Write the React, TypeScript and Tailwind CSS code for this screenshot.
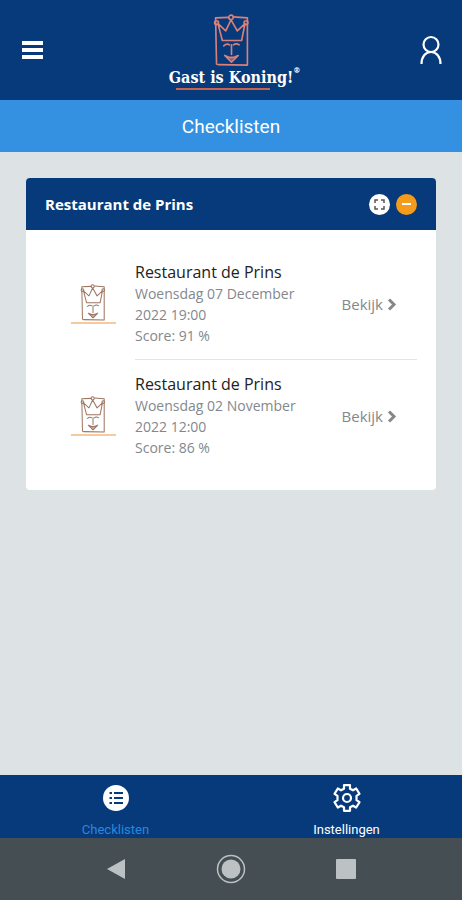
import type { SVGProps } from 'react'

const visits = [
    { id: 1, name: 'Restaurant de Prins', date: 'Woensdag 07 December 2022 19:00', score: 91 },
    { id: 2, name: 'Restaurant de Prins', date: 'Woensdag 02 November 2022 12:00', score: 86 },
]

function KingMark(props: SVGProps<SVGSVGElement>) {
    return (
        <svg viewBox="0 0 38 56" fill="none" stroke="currentColor" strokeLinejoin="round" strokeLinecap="round" aria-hidden="true" {...props}>
            <path d="M16 3.500 2.500 4 3.500 52M21 3l14.500 1L35.500 53 5 52.500" />
            <circle cx="18.500" cy="3.500" r="2.300" />
            <circle cx="3.500" cy="9" r="2" />
            <circle cx="34" cy="9" r="2" />
            <path d="M5 10 9.500 27.500h20L33 10l-8 7.500L18.500 6 13 17.500Z" />
            <path d="M11 33q3-3 6-1M21 32q3-2 6 0M19 32v10" />
            <path d="M12 43l7 7 7-7-5 2h-4Z" fill="currentColor" fillOpacity="0.6" />
        </svg>
    )
}

function Header() {
    return (
        <header className="flex h-[100px] items-center justify-between bg-[#073a7b] px-5 text-white">
            <div className="flex flex-1">
                <button type="button" aria-label="Menu" className="p-0.5">
                    <svg width="21" height="18" viewBox="0 0 21 18" fill="currentColor">
                        <path d="M0 0h21v4H0zM0 7h21v4H0zM0 14h21v4H0z" />
                    </svg>
                </button>
            </div>
            <a href="#" className="flex flex-col items-center pt-1">
                <KingMark className="h-[54px] w-[37px] text-[#d98078]" strokeWidth="1.700" />
                <span className="relative font-['DejaVu_Serif_Condensed','DejaVu_Serif',serif] text-base leading-5 font-bold whitespace-nowrap">
                    Gast is Koning!
                    <span className="absolute -top-1 left-full text-[8px] leading-3">®</span>
                </span>
                <span className="mr-4 h-0.5 w-[94px] bg-[#c8624f]" />
            </a>
            <div className="flex flex-1 justify-end">
                <button type="button" aria-label="Profiel">
                    <svg width="22" height="30" viewBox="0 0 22 30" fill="none" stroke="currentColor" strokeWidth="2.200">
                        <circle cx="11" cy="9.500" r="7.500" />
                        <path d="M1.500 29c0-7.500 4-12 9.500-12s9.500 4.500 9.500 12" />
                    </svg>
                </button>
            </div>
        </header>
    )
}

function Card() {
    return (
        <section className="overflow-hidden rounded bg-white">
            <div className="flex h-[52px] items-center gap-1.5 bg-[#073a7b] px-[19px] text-white">
                <h2 className="flex-1 text-[15px] font-bold">Restaurant de Prins</h2>
                <button type="button" aria-label="Volledig scherm" className="flex size-[21px] items-center justify-center rounded-full bg-white text-[#555]">
                    <svg width="11" height="11" viewBox="0 0 11 11" fill="none" stroke="currentColor" strokeWidth="1.500">
                        <path d="M1 4V1h3M7 1h3v3M10 7v3H7M4 10H1V7" />
                    </svg>
                </button>
                <button type="button" aria-label="Inklappen" className="flex size-[21px] items-center justify-center rounded-full bg-[#f59b1c]">
                    <span className="h-0.5 w-[9px] bg-white" />
                </button>
            </div>
            <ul className="px-[19px] py-[18px]">
                {visits.map((visit) => (
                    <li key={visit.id} className="group flex">
                        <div className="flex w-[90px] flex-col items-center justify-center pl-1.5">
                            <KingMark className="h-[38px] w-[26px] text-[#9c7660]" strokeWidth="1.500" />
                            <span className="h-0.5 w-[45px] bg-[#f6c9a0]" />
                        </div>
                        <div className="flex flex-1 items-center justify-between border-b border-[#e4e4e4] pt-3.5 pb-[13px] pr-5 group-last:border-transparent">
                            <div className="w-[170px] text-sm leading-[21px] text-[#83888e]">
                                <h3 className="text-base leading-[21px] font-medium whitespace-nowrap text-[#222]">{visit.name}</h3>
                                <p>{visit.date}</p>
                                <p>Score: {visit.score} %</p>
                            </div>
                            <a href="#" className="flex items-center gap-1 text-[15px] text-[#85888b]">
                                Bekijk
                                <svg width="10" height="13" viewBox="0 0 10 13" fill="none" stroke="currentColor" strokeWidth="3">
                                    <path d="m2 1.500 5 5-5 5" />
                                </svg>
                            </a>
                        </div>
                    </li>
                ))}
            </ul>
        </section>
    )
}

function BottomNav() {
    return (
        <nav className="grid h-[63px] grid-cols-2 bg-[#073a7b] font-[Roboto,sans-serif] text-[13px] leading-4 text-white">
            <a href="#" className="flex flex-col items-center justify-between pt-[9px] text-[#2d87d8]">
                <svg width="28" height="28" viewBox="0 0 28 28">
                    <circle cx="14" cy="14" r="13" fill="#fff" />
                    <path d="M7.500 9h2.500M12 9h9M7.500 14h2.500M12 14h9M7.500 19h2.500M12 19h9" stroke="#073a7b" strokeWidth="2" />
                </svg>
                Checklisten
            </a>
            <a href="#" className="flex flex-col items-center justify-between pt-[9px]">
                <svg width="28" height="28" viewBox="0 0 28 28" fill="none" stroke="currentColor" strokeWidth="2.200" strokeLinejoin="round">
                    <path d="M11 1.200h6v3.500l3 1.600 3.200-1.800 3.300 5.300-3 2v4.400l3 2-3.300 5.300-3.200-1.800-3 1.600v3.500h-6v-3.500l-3-1.600-3.200 1.800-3.300-5.300 3-2v-4.400l-3-2 3.300-5.300L8 6.300l3-1.600Z" />
                    <circle cx="14" cy="14" r="4" />
                </svg>
                Instellingen
            </a>
        </nav>
    )
}

function SystemBar() {
    return (
        <div className="grid h-[62px] grid-cols-3 place-items-center bg-[#454e53] px-[58px] text-[#bcc2c3]">
            <button type="button" aria-label="Terug">
                <svg width="20" height="22" viewBox="0 0 20 22" fill="currentColor">
                    <path d="M19 1v20L1 11Z" />
                </svg>
            </button>
            <button type="button" aria-label="Start">
                <svg width="30" height="30" viewBox="0 0 30 30" fill="none" stroke="currentColor" strokeWidth="1.500">
                    <circle cx="15" cy="15" r="13.500" />
                    <circle cx="15" cy="15" r="9.500" fill="currentColor" stroke="none" />
                </svg>
            </button>
            <button type="button" aria-label="Recente apps" className="size-5 rounded-[1px] bg-[#bcc2c3]" />
        </div>
    )
}

export default function App() {
    return (
        <div className="flex min-h-screen flex-col bg-[#dde2e5] font-['Open_Sans',sans-serif]">
            <Header />
            <h1 className="flex h-[52px] items-center justify-center bg-[#3490e0] pt-0.5 font-[Roboto,sans-serif] text-[19px] text-white">
                Checklisten
            </h1>
            <main className="flex-1 px-[26px] py-[26px]">
                <Card />
            </main>
            <BottomNav />
            <SystemBar />
        </div>
    )
}
